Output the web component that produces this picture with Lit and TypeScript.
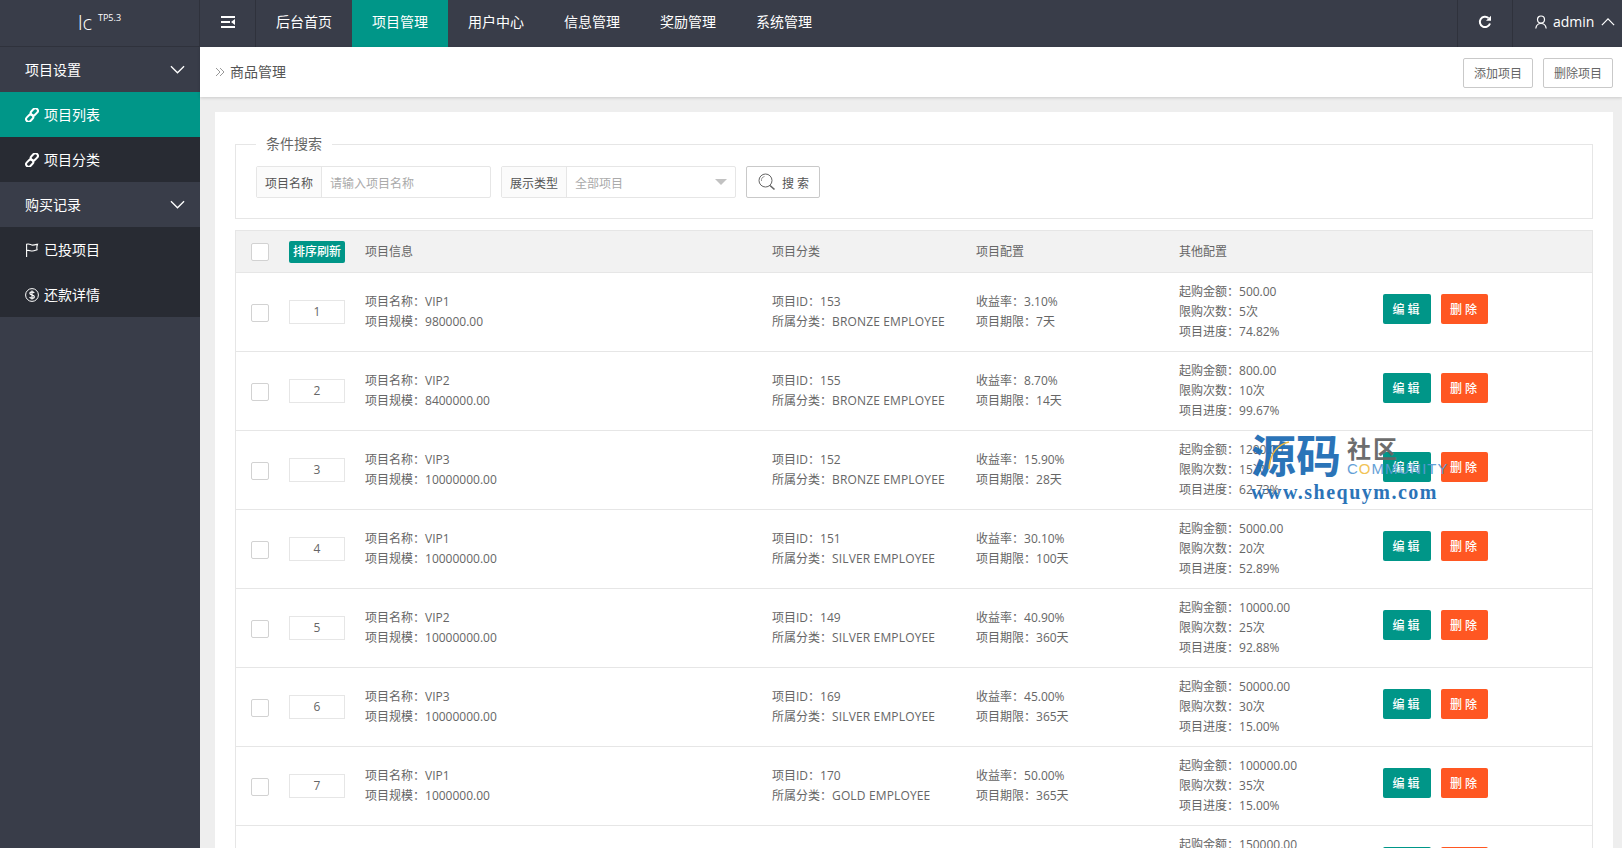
import { LitElement, html, css, svg } from "lit";
import { customElement } from "lit/decorators.js";

const rows = [
  { no: 1, name: "VIP1", size: "980000.00", id: 153, cat: "BRONZE EMPLOYEE", rate: "3.10%", days: "7天", min: "500.00", times: "5次", progress: "74.82%" },
  { no: 2, name: "VIP2", size: "8400000.00", id: 155, cat: "BRONZE EMPLOYEE", rate: "8.70%", days: "14天", min: "800.00", times: "10次", progress: "99.67%" },
  { no: 3, name: "VIP3", size: "10000000.00", id: 152, cat: "BRONZE EMPLOYEE", rate: "15.90%", days: "28天", min: "1200.00", times: "15次", progress: "62.73%" },
  { no: 4, name: "VIP1", size: "10000000.00", id: 151, cat: "SILVER EMPLOYEE", rate: "30.10%", days: "100天", min: "5000.00", times: "20次", progress: "52.89%" },
  { no: 5, name: "VIP2", size: "10000000.00", id: 149, cat: "SILVER EMPLOYEE", rate: "40.90%", days: "360天", min: "10000.00", times: "25次", progress: "92.88%" },
  { no: 6, name: "VIP3", size: "10000000.00", id: 169, cat: "SILVER EMPLOYEE", rate: "45.00%", days: "365天", min: "50000.00", times: "30次", progress: "15.00%" },
  { no: 7, name: "VIP1", size: "1000000.00", id: 170, cat: "GOLD EMPLOYEE", rate: "50.00%", days: "365天", min: "100000.00", times: "35次", progress: "15.00%" },
  { no: 8, name: "VIP2", size: "1000000.00", id: 171, cat: "GOLD EMPLOYEE", rate: "55.00%", days: "365天", min: "150000.00", times: "40次", progress: "15.00%" },
];

const nav = ["后台首页", "项目管理", "用户中心", "信息管理", "奖励管理", "系统管理"];

const chevronDown = svg`<path d="M1 1l7 7 7-7" fill="none" stroke="currentColor" stroke-width="1.4"/>`;
const linkIcon = html`<svg class="ico" viewBox="0 0 14 14" fill="none" stroke="currentColor" stroke-width="2">
  <rect x="5.300" y="1.400" width="8" height="5" rx="2.500" transform="rotate(-45 9.300 3.900)"/>
  <rect x="0.700" y="7.600" width="8" height="5" rx="2.500" transform="rotate(-45 4.700 10.100)"/>
</svg>`;
const flagIcon = html`<svg class="ico" viewBox="0 0 14 14" fill="none" stroke="currentColor" stroke-width="1.100">
  <path d="M1.600 14V1.200c3-.9 4 .9 6 .9 2 0 3.400-.5 4.900-.9-.7 2-1.100 3.200-.4 5.500C10 7.500 9 8 7.200 8 5.200 8 4 6.800 1.600 7.600"/>
</svg>`;
const coinIcon = html`<svg class="ico" viewBox="0 0 14 14" fill="none" stroke="currentColor">
  <circle cx="7" cy="7" r="6.400" stroke-width="1"/>
  <path d="M9.200 4.900C8.800 4.100 8 3.800 7 3.800c-1.200 0-2.100.6-2.100 1.600C4.900 7.700 9.300 6.300 9.300 8.700c0 1-.9 1.600-2.300 1.600-1.100 0-1.900-.4-2.400-1.200M7 2.600v8.800" stroke-width="1.200"/>
</svg>`;

@customElement("app-root")
export class AppRoot extends LitElement {
  static styles = css`
    :host {
      display: grid;
      grid-template-columns: 200px 1fr;
      grid-template-rows: 47px 1fr;
      height: 848px;
      overflow: hidden;
      position: relative;
      background: #eeeeee;
      color: #666;
      font: 12px/20px "Open Sans", "Noto Sans CJK SC", sans-serif;
    }
    .logo {
      background: #393d49;
      color: #fff;
      border-right: 1px solid #2f323c;
      border-bottom: 1px solid #2f323c;
      box-sizing: border-box;
      display: flex;
      justify-content: center;
      align-items: center;
      gap: 6px;
      font-size: 20px;
      font-weight: 300;
    }
    .logo sup {
      font-size: 9px;
      line-height: 10px;
      margin-bottom: 11px;
      font-weight: 400;
    }
    .top {
      background: #393d49;
      color: #fff;
      display: flex;
      font-size: 14px;
    }
    .top > div {
      display: flex;
      align-items: center;
      justify-content: center;
      padding-bottom: 3px;
      box-sizing: border-box;
    }
    .toggle {
      width: 56px;
      border-right: 1px solid #2f323c;
    }
    .nav-item {
      width: 96px;
    }
    .nav-item.on {
      background: #009688;
    }
    .spacer {
      flex: 1;
    }
    .refresh {
      width: 56px;
      border-left: 1px solid #2f323c;
      border-right: 1px solid #2f323c;
    }
    .top > .user {
      width: 109px;
      justify-content: flex-start;
      padding-left: 22px;
      gap: 6px;
      font-size: 14px;
    }
    .side {
      background: #393d49;
      color: #fff;
      font-size: 14px;
    }
    .group,
    .sub {
      height: 45px;
      display: flex;
      align-items: center;
      box-sizing: border-box;
    }
    .group {
      padding: 0 15px 0 25px;
      justify-content: space-between;
    }
    .group svg {
      width: 15px;
      height: 9px;
    }
    .sub {
      padding-left: 25px;
      gap: 5px;
      background: #282b33;
    }
    .sub.on {
      background: #009688;
    }
    .ico {
      width: 14px;
      height: 14px;
      flex: none;
    }
    .main {
      display: flex;
      flex-direction: column;
      min-width: 0;
    }
    .crumb {
      height: 50px;
      flex: none;
      background: #fff;
      box-shadow: 0 1px 3px rgba(0, 0, 0, 0.15);
      display: flex;
      align-items: center;
      padding: 0 9px 0 15px;
      color: #555;
      font-size: 14px;
    }
    .crumb svg {
      width: 10px;
      height: 10px;
      color: #999;
      margin-right: 5px;
    }
    .crumb span {
      flex: 1;
    }
    .plain {
      width: 70px;
      height: 30px;
      margin: 2px 0 0 10px;
      box-sizing: border-box;
      border: 1px solid #c9c9c9;
      border-radius: 2px;
      background: #fff;
      color: #666;
      font: inherit;
      font-size: 12px;
      padding: 2px 0 0;
    }
    .card {
      margin: 15px 9px 0 15px;
      padding: 22px 20px 0;
      background: #fff;
      flex: 1;
    }
    fieldset {
      margin: 0 0 11px;
      padding: 12px 20px 19px;
      border: 1px solid #e6e6e6;
      display: flex;
      gap: 10px;
      height: 85px;
      box-sizing: border-box;
    }
    legend {
      padding: 0 10px;
      font-size: 14px;
      line-height: 20px;
      color: #666;
    }
    .field {
      display: flex;
      width: 235px;
      height: 32px;
      box-sizing: border-box;
      border: 1px solid #e6e6e6;
      border-radius: 2px;
      align-items: center;
    }
    .field b {
      width: 65px;
      height: 100%;
      flex: none;
      box-sizing: border-box;
      background: #fbfbfb;
      border-right: 1px solid #e6e6e6;
      font-weight: 400;
      display: flex;
      align-items: center;
      justify-content: center;
      padding-top: 3px;
      color: #555;
    }
    .field i {
      font-style: normal;
      color: #aaa;
      padding: 3px 0 0 8px;
      flex: 1;
    }
    .caret {
      width: 0;
      height: 0;
      border: 6px solid transparent;
      border-top: 6px solid #c2c2c2;
      border-bottom: 0;
      margin-right: 8px;
    }
    .go {
      width: 74px;
      height: 32px;
      box-sizing: border-box;
      border: 1px solid #c9c9c9;
      border-radius: 2px;
      display: flex;
      align-items: center;
      padding: 3px 0 0 11px;
      gap: 6px;
      color: #555;
      letter-spacing: 3px;
    }
    .go svg {
      width: 18px;
      height: 18px;
      margin-top: -3px;
      flex: none;
    }
    .row {
      display: grid;
      grid-template-columns: 53px 76px 407px 204px 203px 204px 1fr;
      align-items: center;
      height: 79px;
      box-sizing: border-box;
      border: 1px solid #e6e6e6;
      border-top: 0;
    }
    .row.head {
      height: 43px;
      background: #f2f2f2;
      border-top: 1px solid #e6e6e6;
    }
    .row > div {
      min-width: 0;
    }
    .check {
      width: 18px;
      height: 18px;
      margin: 1px 0 0 15px;
      box-sizing: border-box;
      border: 1px solid #d2d2d2;
      background: #fff;
      border-radius: 2px;
    }
    .sort {
      width: 56px;
      height: 22px;
      border-radius: 2px;
      background: #009688;
      color: #fff;
      display: flex;
      align-items: center;
      justify-content: center;
      white-space: nowrap;
      font-weight: 500;
    }
    .num {
      width: 56px;
      height: 24px;
      box-sizing: border-box;
      border: 1px solid #e6e6e6;
      display: flex;
      align-items: center;
      justify-content: center;
    }
    .cat {
      letter-spacing: 0.15px;
    }
    .ops {
      display: flex;
      gap: 10px;
      margin-top: -6px;
    }
    .ops span {
      width: 48px;
      height: 30px;
      border-radius: 2px;
      background: #009688;
      color: #fff;
      display: flex;
      align-items: center;
      justify-content: center;
      letter-spacing: 3px;
      padding: 1px 0 0 1px;
      box-sizing: border-box;
      font-weight: 500;
    }
    .ops .del {
      width: 47px;
      background: #ff5722;
    }
    .mark {
      position: absolute;
      left: 1251px;
      top: 433px;
      width: 200px;
      height: 70px;
      pointer-events: none;
      opacity: 0.95;
    }
    .mark .big {
      position: absolute;
      left: 0;
      top: -3px;
      font: 700 45px/48px "Noto Sans CJK SC", sans-serif;
      color: #1f6db5;
    }
    .mark .cn {
      position: absolute;
      left: 96px;
      top: 2px;
      font: 700 24px/26px "Noto Sans CJK SC", sans-serif;
      letter-spacing: 2px;
      color: #666;
    }
    .mark .en {
      position: absolute;
      left: 96px;
      top: 27px;
      font: 400 15px/18px "Liberation Sans", sans-serif;
      letter-spacing: 1px;
      color: #5b9bd5;
    }
    .mark .en em {
      font-style: normal;
      color: #f2c14e;
    }
    .mark .url {
      position: absolute;
      left: 0;
      top: 48px;
      font: 700 20px/22px "Liberation Serif", serif;
      letter-spacing: 1.500px;
      color: #1f6db5;
      white-space: nowrap;
    }
    .mark svg {
      position: absolute;
      left: 16px;
      top: 8px;
      width: 24px;
      height: 30px;
    }
  `;

  render() {
    return html`
      <div class="logo">lc <sup>TP5.3</sup></div>
      <div class="top">
        <div class="toggle">
          <svg width="14" height="12" viewBox="0 0 14 12" fill="#fff">
            <path d="M0 0h14v2H0zM0 5h9v2H0zM0 10h14v2H0zM10 6l4-3v6z"/>
          </svg>
        </div>
        ${nav.map((n) => html`<div class="nav-item ${n === "项目管理" ? "on" : ""}">${n}</div>`)}
        <div class="spacer"></div>
        <div class="refresh">
          <svg width="14" height="14" viewBox="0 0 14 14" fill="none" stroke="#fff" stroke-width="2">
            <path d="M12 8.500A5.200 5.200 0 1 1 10.500 3"/>
            <path d="M13 .8v5H8z" fill="#fff" stroke="none"/>
          </svg>
        </div>
        <div class="user">
          <svg width="12" height="14" viewBox="0 0 12 14" fill="none" stroke="#fff" stroke-width="1.200">
            <circle cx="6" cy="4.500" r="3.500"/>
            <path d="M.8 13.500c.4-3 2-5 5.200-5s4.800 2 5.200 5"/>
          </svg>
          admin
          <svg width="14" height="8" viewBox="0 0 16 9" style="margin-left:1px">
            <path d="M1 8l7-7 7 7" fill="none" stroke="#fff" stroke-width="1.400"/>
          </svg>
        </div>
      </div>
      <div class="side">
        <div class="group">项目设置<svg viewBox="0 0 16 9">${chevronDown}</svg></div>
        <div class="sub on">${linkIcon}项目列表</div>
        <div class="sub">${linkIcon}项目分类</div>
        <div class="group">购买记录<svg viewBox="0 0 16 9">${chevronDown}</svg></div>
        <div class="sub">${flagIcon}已投项目</div>
        <div class="sub">${coinIcon}还款详情</div>
      </div>
      <div class="main">
        <div class="crumb">
          <svg viewBox="0 0 10 10" fill="none" stroke="currentColor">
            <path d="M1 1l4 4-4 4M5 1l4 4-4 4"/>
          </svg>
          <span>商品管理</span>
          <button class="plain">添加项目</button>
          <button class="plain">删除项目</button>
        </div>
        <div class="card">
          <fieldset>
            <legend>条件搜索</legend>
            <div class="field"><b>项目名称</b><i>请输入项目名称</i></div>
            <div class="field"><b>展示类型</b><i>全部项目</i><span class="caret"></span></div>
            <div class="go">
              <svg viewBox="0 0 18 18" fill="none" stroke="#666">
                <circle cx="7.500" cy="7.500" r="6.500"/>
                <path d="M12 12.500l4.500 4" stroke-width="1.600"/>
                <path d="M3.500 8a4 4 0 0 1 3-4.500" stroke="#9a9a9a"/>
              </svg>
              搜索
            </div>
          </fieldset>
          <div class="row head">
            <div><div class="check"></div></div>
            <div><div class="sort">排序刷新</div></div>
            <div>项目信息</div>
            <div>项目分类</div>
            <div>项目配置</div>
            <div>其他配置</div>
            <div></div>
          </div>
          ${rows.map(
            (r) => html`<div class="row">
              <div><div class="check"></div></div>
              <div><div class="num">${r.no}</div></div>
              <div>项目名称：${r.name}<br />项目规模：${r.size}</div>
              <div>项目ID：${r.id}<br />所属分类：<span class="cat">${r.cat}</span></div>
              <div>收益率：${r.rate}<br />项目期限：${r.days}</div>
              <div>起购金额：${r.min}<br />限购次数：${r.times}<br />项目进度：${r.progress}</div>
              <div class="ops"><span>编辑</span><span class="del">删除</span></div>
            </div>`
          )}
        </div>
      </div>
      <div class="mark">
        <span class="big">源码</span>
        <svg viewBox="0 0 24 30" fill="none" stroke="#f2b632" stroke-width="1.500">
          <path d="M22 1C12 3 3 11 2 28"/>
        </svg>
        <span class="cn">社区</span>
        <span class="en">C<em>O</em>MMUNITY</span>
        <span class="url">www.shequym.com</span>
      </div>
    `;
  }
}
